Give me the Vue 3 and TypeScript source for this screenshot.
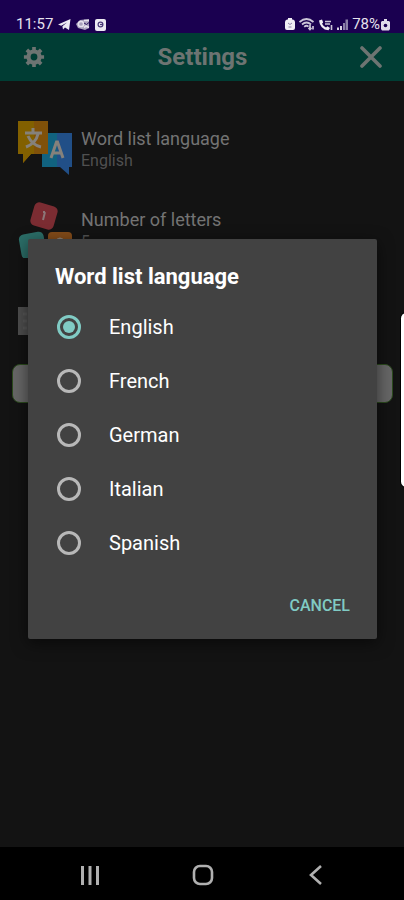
<script setup lang="ts">
import { ref } from 'vue'

const languages: string[] = ['English', 'French', 'German', 'Italian', 'Spanish']
const selected = ref<string>('English')
const open = ref<boolean>(true)
</script>

<template>
  <div class="screen">
    <header class="status">
      <div class="group">
        <span>11:57</span>
        <svg width="13" height="13" viewBox="0 0 13 13" aria-hidden="true">
          <path d="M0 6.5 12.5 1 11 12 7 9.5 5 11.4 4.4 8.2 9 4.500 3.2 7.8Z" fill="#ece9f2" />
        </svg>
        <svg width="14" height="13" viewBox="0 0 14 13" aria-hidden="true">
          <path d="M4 2 13 1V10L9 12 2 10 0 6Z" fill="#a9a2bd" />
          <circle cx="5" cy="6" r="2.6" fill="none" stroke="#e6e2ee" stroke-width="1.5" />
          <path d="M8 2.500H13M8 9.500 10 8 13 9.500" fill="none" stroke="#e6e2ee" stroke-width="1.6" />
          <path d="M8 5 10.5 6.500 13 4.500" fill="none" stroke="#2b1560" />
        </svg>
        <svg width="11" height="13" viewBox="0 0 11 13" aria-hidden="true">
          <rect y="1" width="11" height="12" rx="2" fill="#ece9f2" />
          <circle cx="5.5" cy="6.5" r="2.4" fill="none" stroke="#4a3a78" stroke-width="1.2" />
          <path d="M5 6.500H8" stroke="#4a3a78" stroke-width="1.2" />
        </svg>
      </div>
      <div class="group right">
        <svg width="10" height="14" viewBox="0 0 10 14" aria-hidden="true">
          <path d="M3 1H7V2.5H8Q10 3 10 5V11Q10 13 8 13H2Q0 13 0 11V5Q0 3 2 2.5H3Z" fill="#f0edf5" />
          <path d="M3 6 5 7.500 7 6M3.500 10H6.500" fill="none" stroke="#8b80a8" />
        </svg>
        <svg width="16" height="14" viewBox="0 0 16 14" aria-hidden="true">
          <g fill="none" stroke="#cbc5d8" stroke-width="1.7">
            <path d="M0.5 5Q7.5-1 14.5 5" />
            <path d="M3 7.5Q7.5 3.5 12 7.5" />
            <path d="M5.2 9.8Q7.5 7.8 9.5 9.6" />
            <path d="M11 8V12M9.5 10.8 11 12.4 12.5 10.8M14 12.5V9" />
          </g>
        </svg>
        <svg width="14" height="13" viewBox="0 0 14 13" aria-hidden="true">
          <path d="M0 2.5 3 1.5 4.2 4.5 3 5.8Q4.5 8.5 7 9.5L8.5 8.3 11 10 9.5 12.3Q1 11.5 0 2.5Z" fill="#f0edf5" />
          <path d="M6 3.5H12M6 6H11M12.5 7V12" stroke="#cbc5d8" stroke-width="1.6" />
        </svg>
        <svg width="11" height="13" viewBox="0 0 11 13" aria-hidden="true">
          <path d="M0 12V9.5H2V12ZM3 12V8H5V12Z" fill="#d8d4e2" />
          <path d="M6 12V5H8V12ZM8.500 12V1.500H11V12Z" fill="#8b80a8" />
        </svg>
        <span class="battery">78%</span>
        <svg width="9" height="13" viewBox="0 0 9 13" aria-hidden="true">
          <path d="M3 1H6V3H8L9 4V11L8 12.500H1L0 11V4L1 3H3Z" fill="#e0dcea" />
          <circle cx="4.500" cy="7.500" r="1.800" fill="#1a0050" />
        </svg>
      </div>
    </header>

    <div class="app">
      <div class="toolbar">
        <button class="tool" type="button" aria-label="Preferences">
          <svg width="22" height="22" viewBox="0 0 24 24" aria-hidden="true">
            <g fill="none" stroke="#6d7472">
              <circle cx="12" cy="12" r="6" stroke-width="4.6" />
              <path
                d="M12 1V5M12 19V23M1 12H5M19 12H23M4.200 4.200 7 7M17 17 19.800 19.800M4.200 19.800 7 17M17 7 19.800 4.200"
                stroke-width="4"
              />
            </g>
          </svg>
        </button>
        <h1>Settings</h1>
        <button class="tool" type="button" aria-label="Close">
          <svg width="22" height="22" viewBox="0 0 22 22" aria-hidden="true">
            <path d="M2 2 20 20M20 2 2 20" stroke="#6d7472" stroke-width="3.6" stroke-linecap="round" />
          </svg>
        </button>
      </div>

      <main>
        <section class="row">
          <svg width="55" height="56" viewBox="0 0 55 56" aria-hidden="true">
            <path d="M24 12H54V46H51V54L42 46H24Z" fill="#214f87" />
            <path d="M24 12H39V46H24Z" fill="#11627f" />
            <path d="M0 0H30V33H13L5 42V33H0Z" fill="#805109" />
            <path d="M0 0H16V33H13L5 42V33H0Z" fill="#826000" />
            <g fill="none" stroke="#85817b" stroke-width="3">
              <path d="M7 12H24M15 7V12M20 13Q18 22 8 26M10 15Q14 24 23 26" />
              <path d="M33 37 38.500 21H39.500L45 37M35 32H43" />
            </g>
          </svg>
          <div class="text">
            <h2>Word list language</h2>
            <p>English</p>
          </div>
        </section>

        <section class="row">
          <svg width="55" height="56" viewBox="0 0 55 56" aria-hidden="true">
            <rect x="14" y="2" width="24" height="24" rx="5" fill="#7b2c32" transform="rotate(16 26 14)" />
            <path d="M27 10 25 18M25 10H27" stroke="#8c7778" stroke-width="2" />
            <rect x="2" y="31" width="25" height="25" rx="5" fill="#2b6d67" transform="rotate(-10 14 43)" />
            <rect x="30" y="30" width="24" height="24" rx="4" fill="#824b19" />
            <path d="M38 39Q42 34 46 39" fill="none" stroke="#8c7e70" stroke-width="2" />
          </svg>
          <div class="text">
            <h2>Number of letters</h2>
            <p>5</p>
          </div>
        </section>

        <section class="row keys">
          <svg width="55" height="28" viewBox="0 0 55 28" aria-hidden="true">
            <rect width="55" height="28" fill="#4d4d4d" />
            <path d="M5 7H50M5 14H50M5 21H50" stroke="#565656" stroke-width="3" stroke-dasharray="4 3" />
          </svg>
        </section>

        <button class="wide" type="button" tabindex="-1" aria-hidden="true"></button>
      </main>

      <div v-if="open" class="overlay">
        <form class="dialog" role="dialog" aria-labelledby="dialog-title" @submit.prevent>
          <h2 id="dialog-title">Word list language</h2>
          <label v-for="language in languages" :key="language" class="option">
            <input v-model="selected" type="radio" name="language" :value="language" />
            <span>{{ language }}</span>
          </label>
          <div class="actions">
            <button type="button" @click="open = false">CANCEL</button>
          </div>
        </form>
      </div>
    </div>

    <nav class="navbar">
      <button type="button" aria-label="Recent apps">
        <svg width="24" height="24" viewBox="0 0 24 24" aria-hidden="true">
          <path d="M4.500 3V22M12 3V22M19.500 3V22" stroke="#b0b0b0" stroke-width="3" />
        </svg>
      </button>
      <button type="button" aria-label="Home">
        <svg width="24" height="24" viewBox="0 0 24 24" aria-hidden="true">
          <rect x="3" y="3" width="18" height="18" rx="6" fill="none" stroke="#b0b0b0" stroke-width="2.600" />
        </svg>
      </button>
      <button type="button" aria-label="Back">
        <svg width="24" height="24" viewBox="0 0 24 24" aria-hidden="true">
          <path d="M17 3 7 12 17 21" fill="none" stroke="#b0b0b0" stroke-width="2.600" />
        </svg>
      </button>
    </nav>

    <div class="edge"></div>
  </div>
</template>

<style>
body {
  margin: 0;
  background: #131313;
}
</style>

<style scoped>
.screen {
  position: relative;
  display: flex;
  flex-direction: column;
  min-height: 100vh;
  overflow: hidden;
  background: #131313;
  color: #fff;
  font-family: Roboto, "Liberation Sans", sans-serif;
}

button {
  padding: 0;
  border: 0;
  background: none;
  color: inherit;
  font: inherit;
}

svg {
  display: block;
  flex: none;
}

h1,
h2,
p {
  margin: 0;
}

.status {
  display: flex;
  align-items: center;
  justify-content: space-between;
  height: 18px;
  padding: 15px 14px 0 16px;
  background: #1a0050;
  color: #e6e2ee;
  font-size: 15px;
  line-height: 18px;
}

.group {
  display: flex;
  align-items: center;
  gap: 5px;
}

.right {
  gap: 4px;
}

.battery {
  margin-right: -3px;
}

.app {
  position: relative;
  display: flex;
  flex: 1;
  flex-direction: column;
}

.toolbar {
  display: flex;
  align-items: center;
  justify-content: space-between;
  height: 48px;
  padding: 0 21px 0 22px;
  background: #003d34;
}

.tool {
  display: grid;
  place-items: center;
  width: 24px;
  height: 24px;
}

h1 {
  color: #6d7472;
  font-size: 24px;
  font-weight: 700;
  line-height: 48px;
}

main {
  display: flex;
  flex: 1;
  flex-direction: column;
  padding: 27px 11px 0 12px;
}

.row {
  display: flex;
  align-items: center;
  gap: 8px;
  height: 81px;
  padding: 0 6px;
}

.text h2 {
  color: #737373;
  font-size: 18px;
  font-weight: 400;
  line-height: 24px;
}

.text p {
  color: #505050;
  font-size: 16px;
  line-height: 20px;
}

.keys {
  margin-top: 10px;
}

.wide {
  height: 39px;
  margin-top: 3px;
  border: 1px solid #2b4a1d;
  border-radius: 8px;
  background: #666;
}

.overlay {
  position: absolute;
  inset: 0;
  display: flex;
  align-items: center;
  padding: 0 27px 2px 28px;
}

.dialog {
  flex: 1;
  border-radius: 2px;
  background: #424242;
  box-shadow: 0 4px 16px #0008;
}

.dialog h2 {
  padding: 22px 27px 7px;
  font-size: 22px;
  font-weight: 700;
  line-height: 32px;
}

.option {
  display: flex;
  align-items: center;
  gap: 28px;
  height: 54px;
  padding-left: 29px;
  font-size: 20px;
}

.option input {
  display: grid;
  place-items: center;
  box-sizing: border-box;
  width: 24px;
  height: 24px;
  margin: 0;
  border: 3px solid #b8b8b8;
  border-radius: 50%;
  appearance: none;
}

.option input:checked {
  border-color: #80cbc4;
}

.option input:checked::before {
  width: 12px;
  height: 12px;
  border-radius: 50%;
  background: #80cbc4;
  content: "";
}

.actions {
  display: flex;
  justify-content: flex-end;
  padding: 17px 27px 16px;
}

.actions button {
  height: 36px;
  color: #80cbc4;
  font-size: 16px;
  font-weight: 500;
}

.navbar {
  display: flex;
  align-items: center;
  justify-content: space-around;
  box-sizing: border-box;
  height: 53px;
  padding: 2px 32px 0 34px;
  background: #000;
}

.edge {
  position: absolute;
  top: 313px;
  right: -8px;
  width: 11px;
  height: 174px;
  border-radius: 6px;
  background: #fff;
  box-shadow: 0 0 0 1px #000;
}
</style>
